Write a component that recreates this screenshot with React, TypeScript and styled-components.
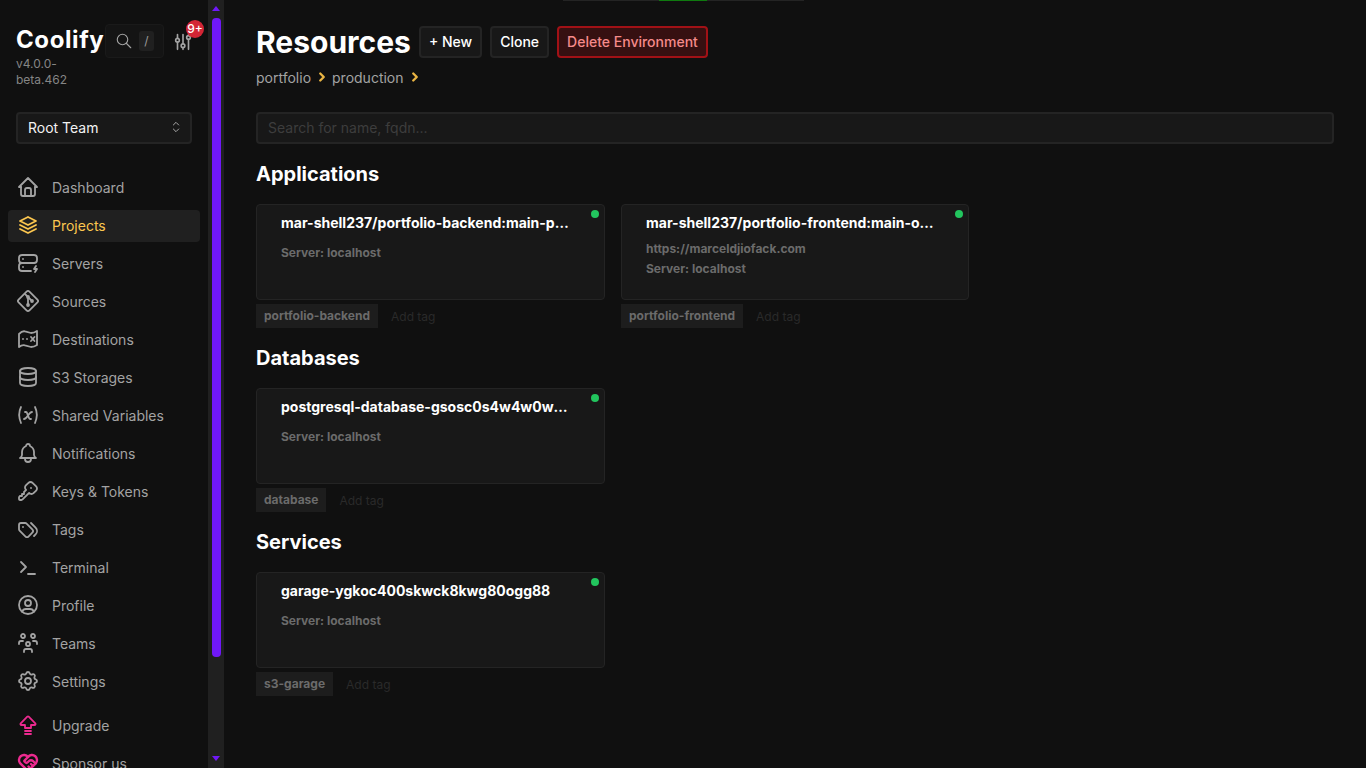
import React from 'react'
import styled, { createGlobalStyle } from 'styled-components'
import {
  TbHome,
  TbStack2,
  TbServerBolt,
  TbBrandGit,
  TbDatabase,
  TbVariable,
  TbBell,
  TbKey,
  TbTags,
  TbUserCircle,
  TbUsersGroup,
  TbSettings,
  TbArrowBigUpLines,
  TbHeartHandshake,
  TbSearch,
  TbAdjustments,
  TbSelector,
  TbChevronRight,
  TbTerminal,
} from 'react-icons/tb'

const GlobalStyle = createGlobalStyle`
  html, body {
    margin: 0;
    height: 100%;
    background: #101010;
    overflow: hidden;
  }
  body, button, input {
    font-family: Inter, "Liberation Sans", sans-serif;
  }
  * {
    box-sizing: border-box;
  }
`

const Page = styled.div`
  display: flex;
  height: 768px;
  color: #fff;
  background: #101010;
`

const Sidebar = styled.aside`
  width: 224px;
  height: 768px;
  flex: none;
  display: flex;
`

const SidebarContent = styled.div`
  width: 208px;
  height: 768px;
  overflow: hidden;
`

const ScrollTrack = styled.div`
  width: 16px;
  height: 768px;
  background: #202020;
  padding: 6px 3px 7px 4px;
  display: flex;
  flex-direction: column;
`

const ScrollArrow = styled.span<{ $down?: boolean }>`
  flex: none;
  width: 0;
  height: 0;
  border-left: 4.5px solid transparent;
  border-right: 4.5px solid transparent;
  border-bottom: ${(p) => (p.$down ? '0' : '5px solid #7018f8')};
  border-top: ${(p) => (p.$down ? '5px solid #7018f8' : '0')};
  margin-top: ${(p) => (p.$down ? 'auto' : '0')};
`

const ScrollThumb = styled.div`
  flex: none;
  width: 9px;
  height: 639px;
  margin-top: 7px;
  border-radius: 4px;
  background: #7018f8;
`

const Brand = styled.div`
  display: flex;
  padding: 24px 0 0 16px;
  height: 112px;
`

const BrandText = styled.div`
  width: 89px;
`

const Logo = styled.div`
  font-size: 24px;
  line-height: 32px;
  font-weight: 700;
  letter-spacing: 0.025em;
`

const Version = styled.div`
  font-size: 12px;
  line-height: 16px;
  color: #858585;
`

const SearchButton = styled.div`
  width: 59px;
  height: 34px;
  border: 1px solid #1a1a1a;
  border-radius: 4px;
  background: #141414;
  display: flex;
  align-items: center;
  gap: 6px;
  padding-left: 9px;
  color: #a3a3a3;
`

const SlashKey = styled.span`
  width: 15px;
  height: 20px;
  border-radius: 3px;
  background: #202020;
  color: #9a9a9a;
  font-size: 12px;
  line-height: 20px;
  text-align: center;
`

const SettingsLink = styled.div`
  position: relative;
  margin-left: 8px;
  margin-top: 7px;
  height: 22px;
  color: #a3a3a3;
`

const Badge = styled.span`
  position: absolute;
  top: -11px;
  left: 14px;
  width: 18px;
  height: 18px;
  border-radius: 50%;
  background: #d32535;
  color: #fff;
  font-size: 12px;
  font-weight: 500;
  line-height: 18px;
  text-align: center;
`

const TeamSelect = styled.div`
  margin: 0 16px;
  width: 176px;
  height: 32px;
  background: #181818;
  border: 2px solid #242424;
  border-radius: 4px;
  display: flex;
  align-items: center;
  justify-content: space-between;
  padding: 0 6px 2px 10px;
  font-size: 14px;
  color: #f2f2f2;
`

const NavList = styled.nav`
  margin-top: 28px;
  padding: 0 8px;
  display: flex;
  flex-direction: column;
  gap: 6px;
`

const NavItem = styled.div<{ $active?: boolean; $gapTop?: boolean }>`
  height: 32px;
  flex: none;
  display: flex;
  align-items: center;
  gap: 12px;
  padding: 0 0 2px 8px;
  width: 192px;
  border-radius: 4px;
  font-size: 14px;
  color: ${(p) => (p.$active ? '#fbc64f' : '#a3a3a3')};
  background: ${(p) => (p.$active ? '#202020' : 'transparent')};
  margin-top: ${(p) => (p.$gapTop ? '6px' : '0')};
  svg {
    flex: none;
    color: ${(p) => (p.$active ? '#fbc64f' : '#a3a3a3')};
  }
`

const PinkIcon = styled.span`
  display: flex;
  svg {
    color: #ec2a8f;
  }
`

const Main = styled.main`
  flex: 1;
  min-width: 0;
  padding: 24px 32px;
  position: relative;
`

const TopStrip = styled.div`
  position: absolute;
  top: 0;
  left: 339px;
  width: 241px;
  height: 1px;
  background: #242424;
`

const TopStripFill = styled.div`
  width: 48px;
  height: 100%;
  margin-left: 96px;
  background: #0f7a0f;
`

const TitleRow = styled.div`
  display: flex;
  align-items: center;
  height: 36px;
  gap: 8px;
`

const Title = styled.h1`
  margin: 0;
  font-size: 30px;
  line-height: 36px;
  font-weight: 700;
`

const Button = styled.button<{ $danger?: boolean }>`
  height: 32px;
  padding: 0 8px 2px;
  border-radius: 4px;
  border: 2px solid ${(p) => (p.$danger ? '#a11116' : '#242424')};
  background: ${(p) => (p.$danger ? '#361011' : '#181818')};
  color: ${(p) => (p.$danger ? '#f58a8a' : '#fff')};
  font-size: 14px;
  font-weight: 500;
`

const Breadcrumb = styled.div`
  display: flex;
  align-items: center;
  margin-top: 5px;
  height: 24px;
  font-size: 14px;
  color: #a3a3a3;
`

const Crumb = styled.span`
  display: flex;
  align-items: center;
  margin-right: 3px;
  svg {
    color: #eab543;
    margin-left: 4px;
  }
`

const SearchInput = styled.input`
  display: block;
  width: 100%;
  height: 32px;
  margin-top: 23px;
  background: #181818;
  border: 2px solid #242424;
  border-radius: 4px;
  padding: 0 10px 2px;
  font-size: 14px;
  color: #fff;
  outline: none;
  &::placeholder {
    color: #3d3d3d;
  }
`

const SectionTitle = styled.h2`
  margin: 0;
  height: 28px;
  font-size: 20px;
  line-height: 28px;
  font-weight: 700;
`

const Section = styled.section`
  margin-top: 16px;
`

const Grid = styled.div`
  display: grid;
  grid-template-columns: 349px 348px;
  column-gap: 16px;
  margin-top: 16px;
`

const CardColumn = styled.div`
  display: flex;
  flex-direction: column;
`

const Card = styled.div`
  position: relative;
  height: 96px;
  border: 1px solid #242424;
  border-radius: 4px;
  background: #181818;
  padding: 8px 24px;
`

const StatusDot = styled.span`
  position: absolute;
  top: 5px;
  right: 5px;
  width: 8px;
  height: 8px;
  border-radius: 50%;
  background: #22c55e;
`

const CardTitle = styled.div`
  font-size: 14px;
  line-height: 20px;
  font-weight: 700;
  white-space: nowrap;
  overflow: hidden;
  text-overflow: ellipsis;
  width: 288px;
`

const CardMeta = styled.div<{ $gap: number }>`
  font-size: 12px;
  line-height: 16px;
  font-weight: 700;
  color: #6b6b6b;
  margin-top: ${(p) => p.$gap}px;
`

const TagRow = styled.div`
  display: flex;
  align-items: center;
  height: 24px;
  margin-top: 4px;
`

const Tag = styled.span`
  height: 24px;
  padding: 0 8px;
  background: #1d1d1d;
  font-size: 12px;
  line-height: 24px;
  font-weight: 700;
  color: #6b6b6b;
`

const AddTag = styled.span`
  margin-left: 13px;
  font-size: 12px;
  color: #2a2a2a;
`

// folded map with a small x, not in the icon sets in this shape
const DestinationIcon: React.FC<{ size: number; strokeWidth?: number }> = ({ size, strokeWidth = 1.8 }) => (
  <svg
    width={size}
    height={size}
    viewBox="0 0 24 24"
    fill="none"
    stroke="currentColor"
    strokeWidth={strokeWidth}
    strokeLinecap="round"
    strokeLinejoin="round"
  >
    <path d="M3 7v13c2-1.6 4-2.2 6-1.600l6 1.600c2 0 4-.6 6-2V4c-2 1.400-4 2-6 2L9 4.400C7 3.800 5 5 3 7z" />
    <path d="M7 12h.01M11 12h.01M15 10l3.500 4M18.500 10L15 14" />
  </svg>
)

const navTop = [
  { label: 'Dashboard', icon: TbHome },
  { label: 'Projects', icon: TbStack2, active: true },
  { label: 'Servers', icon: TbServerBolt },
  { label: 'Sources', icon: TbBrandGit },
  { label: 'Destinations', icon: DestinationIcon },
  { label: 'S3 Storages', icon: TbDatabase },
  { label: 'Shared Variables', icon: TbVariable },
  { label: 'Notifications', icon: TbBell },
  { label: 'Keys & Tokens', icon: TbKey },
  { label: 'Tags', icon: TbTags },
  { label: 'Terminal', icon: TbTerminal },
  { label: 'Profile', icon: TbUserCircle },
  { label: 'Teams', icon: TbUsersGroup },
  { label: 'Settings', icon: TbSettings },
]

interface ResourceProps {
  title: string
  url?: string
  tag: string
}

const Resource: React.FC<ResourceProps> = ({ title, url, tag }) => (
  <CardColumn>
    <Card>
      <StatusDot />
      <CardTitle>{title}</CardTitle>
      {url ? <CardMeta $gap={8}>{url}</CardMeta> : null}
      <CardMeta $gap={url ? 4 : 12}>Server: localhost</CardMeta>
    </Card>
    <TagRow>
      <Tag>{tag}</Tag>
      <AddTag>Add tag</AddTag>
    </TagRow>
  </CardColumn>
)

const App: React.FC = () => {
  return (
    <Page>
      <GlobalStyle />
      <Sidebar>
        <SidebarContent>
          <Brand>
            <BrandText>
              <Logo>Coolify</Logo>
              <Version>v4.0.0-beta.462</Version>
            </BrandText>
            <SearchButton>
              <TbSearch size={18} strokeWidth={1.5} />
              <SlashKey>/</SlashKey>
            </SearchButton>
            <SettingsLink>
              <TbAdjustments size={22} strokeWidth={1.8} />
              <Badge>9+</Badge>
            </SettingsLink>
          </Brand>
          <TeamSelect>
            Root Team
            <TbSelector size={16} color="#a8a8a8" strokeWidth={1.5} />
          </TeamSelect>
          <NavList>
            {navTop.map((item) => (
              <NavItem key={item.label} $active={item.active}>
                <item.icon size={24} strokeWidth={1.8} />
                {item.label}
              </NavItem>
            ))}
            <NavItem $gapTop>
              <PinkIcon>
                <TbArrowBigUpLines size={24} strokeWidth={1.8} />
              </PinkIcon>
              Upgrade
            </NavItem>
            <NavItem>
              <PinkIcon>
                <TbHeartHandshake size={24} strokeWidth={2.4} />
              </PinkIcon>
              Sponsor us
            </NavItem>
          </NavList>
        </SidebarContent>
        <ScrollTrack>
          <ScrollArrow />
          <ScrollThumb />
          <ScrollArrow $down />
        </ScrollTrack>
      </Sidebar>
      <Main>
        <TopStrip>
          <TopStripFill />
        </TopStrip>
        <TitleRow>
          <Title>Resources</Title>
          <Button>+ New</Button>
          <Button>Clone</Button>
          <Button $danger>Delete Environment</Button>
        </TitleRow>
        <Breadcrumb>
          <Crumb>
            portfolio
            <TbChevronRight size={14} strokeWidth={4} />
          </Crumb>
          <Crumb>
            production
            <TbChevronRight size={14} strokeWidth={4} />
          </Crumb>
        </Breadcrumb>
        <SearchInput placeholder="Search for name, fqdn..." />
        <Section>
          <SectionTitle>Applications</SectionTitle>
          <Grid>
            <Resource
              title="mar-shell237/portfolio-backend:main-pkg8sw0k4wk4"
              tag="portfolio-backend"
            />
            <Resource
              title="mar-shell237/portfolio-frontend:main-ok4wc8s0gk0c"
              url="https://marceldjiofack.com"
              tag="portfolio-frontend"
            />
          </Grid>
        </Section>
        <Section>
          <SectionTitle>Databases</SectionTitle>
          <Grid>
            <Resource title="postgresql-database-gsosc0s4w4w0wgkk8c0o" tag="database" />
          </Grid>
        </Section>
        <Section>
          <SectionTitle>Services</SectionTitle>
          <Grid>
            <Resource title="garage-ygkoc400skwck8kwg80ogg88" tag="s3-garage" />
          </Grid>
        </Section>
      </Main>
    </Page>
  )
}

export default App
